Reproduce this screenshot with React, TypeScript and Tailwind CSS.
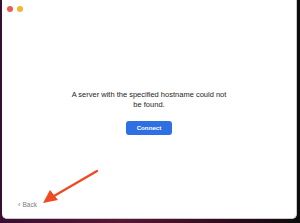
import React from "react";

export default function App() {
  return (
    <div
      className="relative w-[300px] h-[223px] overflow-hidden bg-[linear-gradient(90deg,#3a0e33_0%,#5a1634_40%,#2a0a1a_80%,#0d0d0d_100%)] pl-[2px] pr-[3px] pb-[4px]"
      style={{ fontFamily: '"Liberation Sans", Arial, sans-serif' }}
    >
      <div className="w-full h-full bg-white rounded-b-[5px] border-r border-b border-[#c9c9c9] flex flex-col">
        <div className="h-[18px] flex items-center pl-[5px] gap-[4px] shrink-0">
          <div className="w-[6px] h-[6px] rounded-full bg-[#ee5b50]" />
          <div className="w-[6px] h-[6px] rounded-full bg-[#f2b634]" />
        </div>
        <div className="flex-1 flex flex-col items-center pt-[72px]">
          <p className="w-[162px] text-center text-[7.5px] leading-[9.5px] text-[#1e1e1e]">
            A server with the specified hostname could not be found.
          </p>
          <button className="mt-[12px] w-[46px] h-[14px] rounded-[3px] bg-[#2f6fe4] text-white text-[6.2px] font-bold flex items-center justify-center">
            Connect
          </button>
        </div>
        <div className="pl-[16px] pb-[9px] text-[6.5px] leading-[8px] text-[#7d7d7d] flex items-center gap-[2px]">
          <span className="text-[7.5px]">‹</span>
          <span>Back</span>
        </div>
      </div>
      <svg
        className="absolute left-0 top-0 pointer-events-none"
        width="300"
        height="223"
        viewBox="0 0 300 223"
      >
        <line x1="97" y1="171" x2="54" y2="196" stroke="#f04a23" strokeWidth="2.4" strokeLinecap="round" />
        <polygon points="43,203 50,190 58,200" fill="#f04a23" />
      </svg>
    </div>
  );
}
